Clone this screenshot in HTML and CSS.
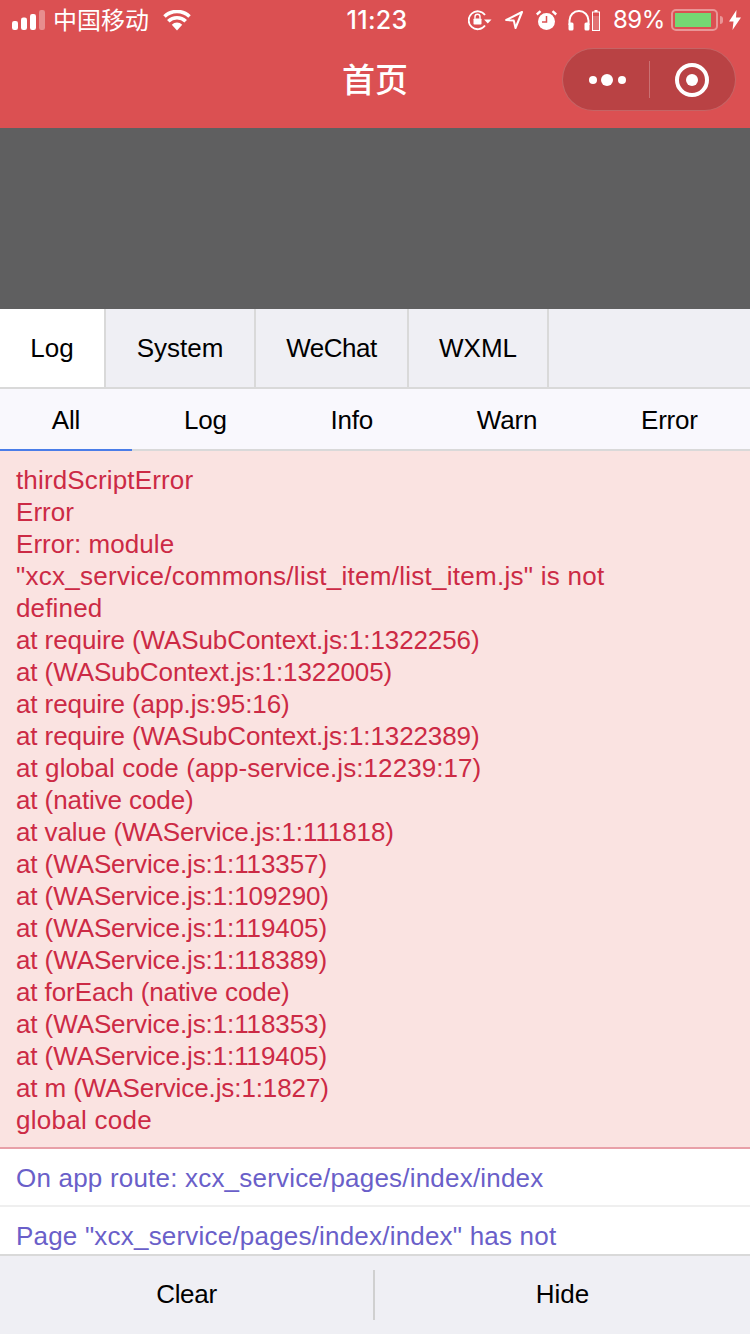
FILE: index.html
```html
<!DOCTYPE html>
<html lang="zh">
<head>
<meta charset="utf-8">
<title>首页</title>
<link rel="stylesheet" href="styles.css">
</head>
<body>
<div class="page">
  <header class="top">
    <div class="status">
      <div class="status-left">
        <svg class="signal" width="33" height="20" viewBox="0 0 33 20"><rect x="0" y="11" width="6" height="9" rx="2.200" fill="#fff"/><rect x="9" y="7.500" width="6" height="12.500" rx="2.200" fill="#fff"/><rect x="18" y="4" width="6" height="16" rx="2.200" fill="#fff"/><rect x="27" y="0" width="6" height="20" rx="2.200" fill="#fff" opacity=".35"/></svg>
        <span class="carrier">中国移动</span>
        <svg class="wifi" width="28" height="21" viewBox="0 0 28 21"><path d="M14 20.500l-5.200-5.800a7.500 7.500 0 0 1 10.400 0z" fill="#fff"/><path d="M5.300 11.300a12.500 12.500 0 0 1 17.400 0M1.500 6.500a18 18 0 0 1 25 0" fill="none" stroke="#fff" stroke-width="3.600"/></svg>
      </div>
      <div class="clock">11:23</div>
      <div class="status-right">
        <svg class="ic-lock" width="24" height="21" viewBox="0 0 24 21"><path d="M17 5A9 9 0 1 0 17 15.500" fill="none" stroke="#fff" stroke-width="1.800"/><path d="M16 9.500h7.500l-3.700 4z" fill="#fff"/><rect x="5.500" y="8.500" width="8" height="6" rx=".8" fill="#fff"/><path d="M7 8.800V6.800a2.500 2.500 0 0 1 5 0v2" fill="none" stroke="#fff" stroke-width="1.400"/></svg>
        <svg class="ic-loc" width="18" height="18" viewBox="0 0 18 18"><path d="M17 1L1.200 9l7.600 .6L10.500 17z" fill="none" stroke="#fff" stroke-width="2" stroke-linejoin="round"/></svg>
        <svg class="ic-alarm" width="21" height="21" viewBox="0 0 21 21"><circle cx="10.500" cy="11.500" r="8.500" fill="#fff"/><path d="M10.500 6v6H6" fill="none" stroke="#db5052" stroke-width="1.500"/><path d="M.8 4.500L4.500 1.200M20.200 4.500L16.500 1.200" stroke="#fff" stroke-width="2.400"/></svg>
        <svg class="ic-head" width="22" height="21" viewBox="0 0 22 21"><path d="M1.500 15V10.500a9.500 9.500 0 0 1 19 0V15" fill="none" stroke="#fff" stroke-width="2"/><rect x=".5" y="12.500" width="5" height="8" rx="1.500" fill="#fff"/><rect x="16.500" y="12.500" width="5" height="8" rx="1.500" fill="#fff"/></svg>
        <svg class="ic-minibat" width="8" height="21" viewBox="0 0 8 21"><rect x="2.500" y="0" width="3" height="2" fill="#fff"/><rect x=".5" y="2" width="7" height="18.500" fill="none" stroke="#fff"/><rect x="1" y="6" width="6" height="14" fill="#fff" opacity=".2"/></svg>
        <span class="pct">89%</span>
        <div class="battery"><div class="battery-fill"></div></div>
        <div class="battery-nub"></div>
        <svg class="ic-bolt" width="12" height="20" viewBox="0 0 12 20"><path d="M7.500 0L0 11.500h4.500L3.500 20 12 7.500H7z" fill="#fff"/></svg>
      </div>
    </div>
    <div class="nav">
      <div class="title">首页</div>
      <div class="capsule">
        <div class="capsule-part capsule-more">
          <svg width="40" height="14" viewBox="0 0 40 14"><circle cx="4" cy="7" r="4" fill="#fff"/><circle cx="18" cy="7" r="6" fill="#fff"/><circle cx="33" cy="7" r="4" fill="#fff"/></svg>
        </div>
        <div class="capsule-part capsule-target">
          <svg width="36" height="36" viewBox="0 0 36 36"><circle cx="18" cy="18" r="15" fill="none" stroke="#fff" stroke-width="4"/><circle cx="18" cy="18" r="6" fill="#fff"/></svg>
        </div>
      </div>
    </div>
  </header>
  <div class="canvas"></div>
  <nav class="tabs">
    <div class="tab tab-on tab-log">Log</div>
    <div class="tab tab-system">System</div>
    <div class="tab tab-wechat">WeChat</div>
    <div class="tab tab-wxml">WXML</div>
  </nav>
  <nav class="subtabs">
    <div class="subtab subtab-on">All</div>
    <div class="subtab">Log</div>
    <div class="subtab">Info</div>
    <div class="subtab">Warn</div>
    <div class="subtab">Error</div>
  </nav>
  <main class="logs">
    <div class="error">
      <div class="words">thirdScriptError</div>
      <div class="plain">Error</div>
      <div class="plain">Error: module</div>
      <div class="long">"xcx_service/commons/list_item/list_item.js" is not</div>
      <div class="words">defined</div>
      <div class="stack">at require (WASubContext.js:1:1322256)</div>
      <div class="stack">at (WASubContext.js:1:1322005)</div>
      <div class="stack">at require (app.js:95:16)</div>
      <div class="stack">at require (WASubContext.js:1:1322389)</div>
      <div class="stack-wide">at global code (app-service.js:12239:17)</div>
      <div class="stack">at (native code)</div>
      <div class="stack">at value (WAService.js:1:111818)</div>
      <div class="stack">at (WAService.js:1:113357)</div>
      <div class="stack">at (WAService.js:1:109290)</div>
      <div class="stack">at (WAService.js:1:119405)</div>
      <div class="stack">at (WAService.js:1:118389)</div>
      <div class="stack">at forEach (native code)</div>
      <div class="stack">at (WAService.js:1:118353)</div>
      <div class="stack">at (WAService.js:1:119405)</div>
      <div class="stack">at m (WAService.js:1:1827)</div>
      <div class="long">global code</div>
    </div>
    <div class="info">On app route: xcx_service/pages/index/index</div>
    <div class="info">Page "xcx_service/pages/index/index" has not</div>
  </main>
  <footer class="foot">
    <div class="foot-btn foot-clear">Clear</div>
    <div class="foot-btn">Hide</div>
  </footer>
</div>
</body>
</html>
```

FILE: styles.css
```css
* { box-sizing: border-box; }
html, body { margin: 0; padding: 0; }
body { font-family: "Liberation Sans", "Noto Sans CJK SC", sans-serif; color: #000; background: #fff; }
.page { width: 750px; height: 1334px; display: flex; flex-direction: column; overflow: hidden; }

.top { height: 128px; flex: none; background: #db5052; color: #fff; }
.status { height: 40px; display: grid; grid-template-columns: 1fr auto 1fr; align-items: center; }
.status-left { display: flex; align-items: center; padding-left: 12px; }
.carrier { margin-left: 8px; margin-top: -3px; font: 400 24px/40px "Noto Sans CJK SC", sans-serif; }
.wifi { margin-left: 14px; }
.clock { padding-left: 4px; font: 500 25px/40px Inter, sans-serif; letter-spacing: .3px; }
.status-right { display: flex; align-items: center; justify-content: flex-end; padding-right: 9px; }
.ic-loc { margin-left: 13px; }
.ic-alarm { margin-left: 13px; }
.ic-head { margin-left: 11px; }
.ic-minibat { margin-left: 2px; }
.pct { margin-left: 13px; font: 400 24px/40px Inter, sans-serif; letter-spacing: -.4px; }
.battery { margin-left: 6px; width: 47px; height: 22px; border: 2px solid rgba(255,255,255,.4); border-radius: 5px; padding: 2px; }
.battery-fill { width: 36px; height: 14px; background: #74d873; }
.battery-nub { margin-left: 2px; width: 3px; height: 8px; background: rgba(255,255,255,.4); border-radius: 0 3px 3px 0; }
.ic-bolt { margin-left: 6px; }

.nav { height: 88px; display: flex; align-items: flex-start; justify-content: flex-end; padding: 8px 14px 0 0; position: relative; }
.title { position: absolute; left: 0; right: 0; top: 10px; text-align: center; font: 500 33px/56px "Noto Sans CJK SC", sans-serif; }
.capsule { width: 174px; height: 63px; display: flex; background: #b94244; border: 1px solid rgba(255,255,255,.18); border-radius: 32px; align-items: center; }
.capsule-part { flex: 1; display: flex; align-items: center; justify-content: center; height: 37px; }
.capsule-more { border-right: 1px solid rgba(255,255,255,.25); flex: none; width: 87px; padding-left: 6px; }
.capsule-target { padding-right: 2px; }

.canvas { height: 181px; flex: none; background: #5f5f60; }

.tabs { height: 80px; flex: none; display: flex; background: #efeff4; border-bottom: 2px solid #d9d9d9; }
.tab { border-right: 2px solid #d9d9d9; font-size: 26px; line-height: 78px; text-align: center; }
.tab-on { background: #fff; }
.tab-log { width: 106px; }
.tab-system { width: 150px; }
.tab-wechat { width: 153px; letter-spacing: -.5px; }
.tab-wxml { width: 140px; }

.subtabs { height: 62px; flex: none; display: flex; background: #f9f8fd; border-bottom: 2px solid #d9d9d9; }
.subtab { padding: 0 52px 0 51.800px; height: 62px; font-size: 26px; line-height: 62px; letter-spacing: -.2px; border-bottom: 2px solid transparent; }
.subtab-on { border-bottom-color: #4a7de8; }

.logs { flex: 1; min-height: 0; overflow: hidden; background: #fff; }
.error { background: #fae3e1; color: #cc2a45; border-bottom: 2px solid #e8a0a8; padding: 13px 16px 11px; font-size: 26px; line-height: 32px; }
.words { letter-spacing: .15px; }
.plain { letter-spacing: .05px; }
.long { letter-spacing: .27px; }
.stack { letter-spacing: -.1px; }
.stack-wide { letter-spacing: .07px; }
.info { color: #6a5fc9; padding: 13px 16px 11px; font-size: 26px; line-height: 32px; letter-spacing: .2px; border-bottom: 2px solid #efefef; }

.foot { height: 80px; flex: none; display: flex; align-items: center; background: #efeff4; border-top: 2px solid #d9d9d9; }
.foot-btn { flex: 1; height: 50px; font-size: 26px; line-height: 48px; text-align: center; }
.foot-clear { flex: none; width: 375px; border-right: 2px solid #d0d0d0; letter-spacing: -.3px; }
```
